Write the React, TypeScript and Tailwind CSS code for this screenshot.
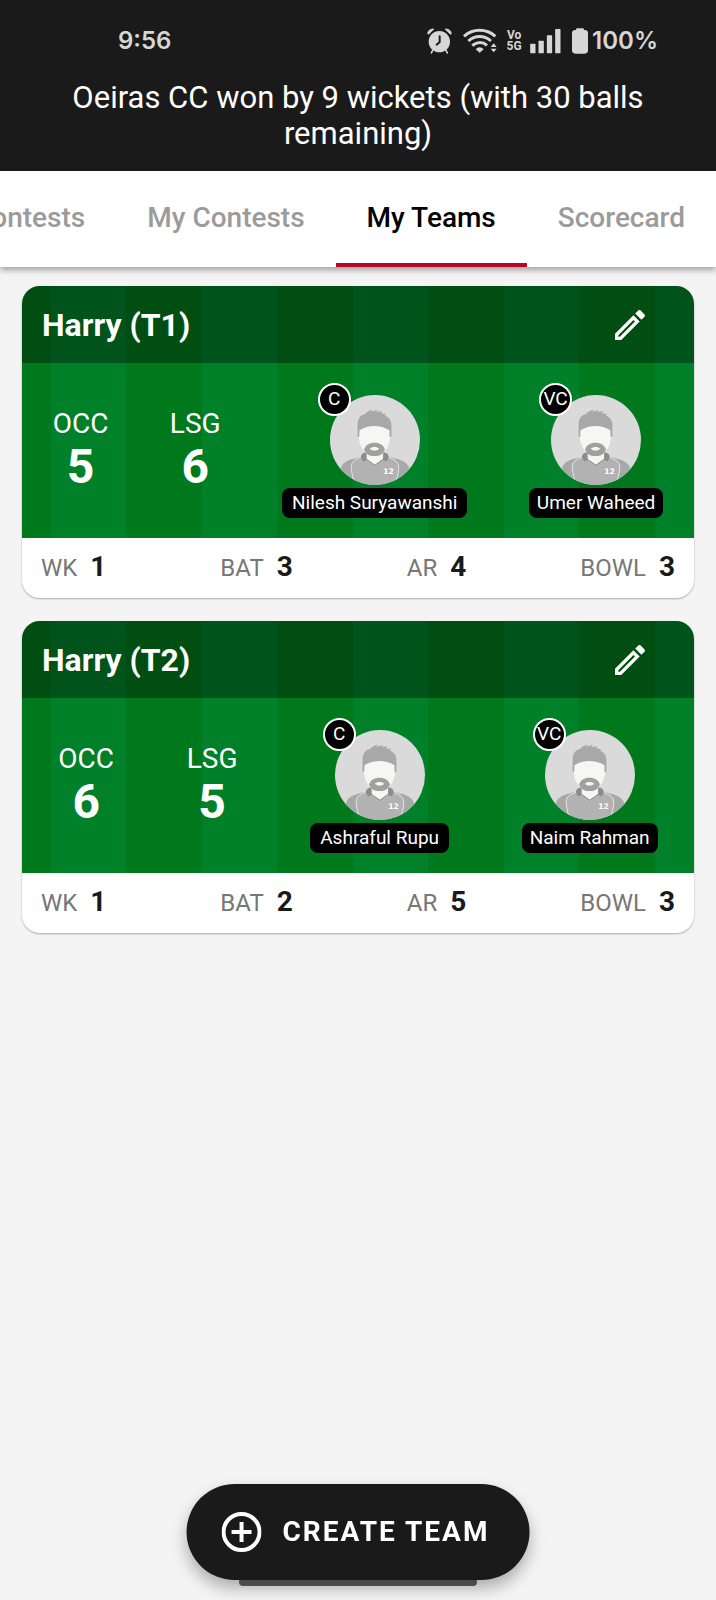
import React from 'react';

type Player = {
  badge: string;
  name: string;
};

type Team = {
  name: string;
  squads: { code: string; count: number }[];
  players: Player[];
  roles: { label: string; count: number }[];
};

const tabs = ['Contests', 'My Contests', 'My Teams', 'Scorecard'];

const teams: Team[] = [
  {
    name: 'Harry (T1)',
    squads: [
      { code: 'OCC', count: 5 },
      { code: 'LSG', count: 6 },
    ],
    players: [
      { badge: 'C', name: 'Nilesh Suryawanshi' },
      { badge: 'VC', name: 'Umer Waheed' },
    ],
    roles: [
      { label: 'WK', count: 1 },
      { label: 'BAT', count: 3 },
      { label: 'AR', count: 4 },
      { label: 'BOWL', count: 3 },
    ],
  },
  {
    name: 'Harry (T2)',
    squads: [
      { code: 'OCC', count: 6 },
      { code: 'LSG', count: 5 },
    ],
    players: [
      { badge: 'C', name: 'Ashraful Rupu' },
      { badge: 'VC', name: 'Naim Rahman' },
    ],
    roles: [
      { label: 'WK', count: 1 },
      { label: 'BAT', count: 2 },
      { label: 'AR', count: 5 },
      { label: 'BOWL', count: 3 },
    ],
  },
];

const StatusBar = () => (
  <div className="flex h-20 items-center justify-between pt-0.5 pr-[58px] pl-[118px] font-['Inter',sans-serif] text-2xl font-semibold text-[#d6d6d6]">
    <span>9:56</span>
    <div className="flex items-center">
      <svg viewBox="210 82 75 78" className="mr-[11px] h-[26px] w-[25px]" aria-hidden="true">
        <circle cx="247" cy="123" r="32" fill="currentColor" />
        <path d="M212 99c0-9 8-15 19-14l-16 16zM283 99c0-9-8-15-19-14l16 16z" fill="currentColor" stroke="currentColor" strokeWidth="2" strokeLinejoin="round" />
        <path d="M227 149l-4 8M267 149l4 8" stroke="currentColor" strokeWidth="5" strokeLinecap="round" />
        <path d="M248 107v17l-9 8" fill="none" stroke="#1a1a1a" strokeWidth="6" strokeLinecap="round" strokeLinejoin="round" />
      </svg>
      <svg viewBox="318 82 105 78" className="mr-[9px] h-[26px] w-[35px]" aria-hidden="true">
        <g fill="none" stroke="currentColor" strokeWidth="9">
          <path d="M321 107c27-24 67-24 94 0" />
          <path d="M334 121c20-18 48-18 68 0" />
          <path d="M346 135c13-12 31-12 44-1" />
        </g>
        <path d="M356 146c7-8 17-8 24 0l-12 10z" fill="currentColor" />
        <path d="M401 139l9-11 9 11zM401 144l9 11 9-11z" fill="currentColor" />
      </svg>
      <span className="mr-[9px] flex w-[14px] flex-col items-center font-['Liberation_Sans_Narrow','Roboto',sans-serif] text-xs leading-[11px] font-bold">
        <span>Vo</span>
        <span>5G</span>
      </span>
      <svg viewBox="518 82 92 78" className="mr-[11px] h-[26px] w-[31px]" fill="currentColor" aria-hidden="true">
        <rect x="518" y="129" width="16" height="29" rx="2" />
        <rect x="543" y="120" width="16" height="38" rx="2" />
        <rect x="568" y="104" width="16" height="54" rx="2" />
        <rect x="593" y="85" width="16" height="73" rx="2" />
      </svg>
      <svg viewBox="642 80 48 78" className="mr-1 h-[26px] w-4" fill="currentColor" aria-hidden="true">
        <rect x="654" y="81" width="24" height="14" rx="4" />
        <rect x="642" y="86" width="48" height="71" rx="10" />
      </svg>
      <span>100%</span>
    </div>
  </div>
);

const Avatar = () => (
  <svg viewBox="58 60 271 271" className="h-[90px] w-[90px] rounded-full bg-[#dadada]" aria-hidden="true">
    {/* shirt */}
    <path d="M90 292c0-26 14-36 62-46l40-8 40 8c50 10 66 20 66 48v40H90z" fill="#a8a8a8" />
    <path d="M152 247c-22 8-32 16-30 34 2 16 6 30 8 52h126c2-22 8-36 9-52 1-18-10-26-32-34l-40-6z" fill="#b2b2b2" />
    <path d="M152 247c-22 8-32 16-30 34 2 16 6 30 8 52M233 247c22 8 33 16 32 34-1 16-7 30-9 52" fill="none" stroke="#e6e6e6" strokeWidth="3" />
    {/* neck and collar */}
    <path d="M168 228h50v28l-25 20-25-20z" fill="#f6f6f4" />
    <path d="M168 233c-10 0-17 5-17 16l7 11 10-4 25 19 25-19 10 4 7-11c0-11-7-16-17-16v19l-25 18-25-18z" fill="#8c8c8c" />
    {/* face */}
    <path d="M145 165c20-20 75-20 94 0v22c-3 32-18 54-47 54s-45-22-47-54z" fill="#f6f6f4" />
    <path d="M161 223c4-12 15-19 31-19s27 7 31 19c-4 14-14 21-31 21s-27-7-31-21z" fill="#a0a0a0" />
    <path d="M178 222c6-7 22-7 28 0-4 7-24 7-28 0z" fill="#f6f6f4" />
    {/* hair */}
    <path d="M141 186v-38c1-18 9-29 23-31 6-7 14-11 23-13l-5 7c7-3 14-5 20-5l-5 6c7-3 13-3 19-1l-5 5c7-1 12 0 17 3l-6 3c12 4 20 13 21 27v37h-6v-20c-27-17-64-17-90 0l-1 20z" fill="#a8a8a8" />
    <text x="234" y="298" textAnchor="middle" fill="#fff" className="font-['DejaVu_Sans',sans-serif] text-[23px] font-bold">12</text>
  </svg>
);

const PlayerPick = ({ badge, name }: Player) => (
  <div className="flex flex-col items-center gap-[3px]">
    <div className="relative">
      <Avatar />
      <span className="absolute -top-3 -left-3 flex h-[33px] w-[33px] items-center justify-center rounded-full border-2 border-white bg-black text-[19px]">
        {badge}
      </span>
    </div>
    <span className={`rounded-lg bg-black text-[19px] leading-[30px] ${badge === 'C' ? 'px-2.5' : 'px-2'}`}>{name}</span>
  </div>
);

const TeamCard = ({ team }: { team: Team }) => (
  <article className="overflow-hidden rounded-[18px] bg-white shadow-[0_1px_2px_rgba(0,0,0,0.3)]">
    <div className="bg-[repeating-linear-gradient(90deg,#00781c_0_29px,#008028_29px_104px,#00781c_104px_151px)] text-white">
      <div className="flex h-[77px] items-center justify-between bg-black/35 pr-11 pl-5">
        <h2 className="text-[32px] font-bold">{team.name}</h2>
        <button type="button" aria-label={`Edit ${team.name}`}>
          <svg viewBox="0 0 24 24" className="h-10 w-10" fill="currentColor" aria-hidden="true">
            <path d="M14.06 9.02l.92.92L5.92 19H5v-.92l9.06-9.06M17.66 3c-.25 0-.51.1-.7.29l-1.83 1.83 3.75 3.75 1.83-1.83c.39-.39.39-1.02 0-1.41l-2.34-2.34c-.2-.2-.45-.29-.71-.29zm-3.6 3.19L3 17.25V21h3.75L17.81 9.94l-3.75-3.75z" />
          </svg>
        </button>
      </div>
      <div className="flex items-center justify-around pt-8 pb-5">
        {team.squads.map((squad) => (
          <div key={squad.code} className="mb-3 flex flex-col items-center">
            <span className="text-[28px] leading-8">{squad.code}</span>
            <span className="text-5xl leading-[54px] font-bold">{squad.count}</span>
          </div>
        ))}
        {team.players.map((player) => (
          <PlayerPick key={player.name} {...player} />
        ))}
      </div>
    </div>
    <dl className="flex h-[60px] items-center justify-between px-[19px] pb-0.5">
      {team.roles.map((role) => (
        <div key={role.label} className="flex items-baseline gap-[13px]">
          <dt className="text-2xl text-[#777]">{role.label}</dt>
          <dd className="text-[28px] font-bold text-[#1a1a1a]">{role.count}</dd>
        </div>
      ))}
    </dl>
  </article>
);

const App = () => {
  return (
    <div className="flex min-h-screen flex-col bg-[#f4f4f4] font-['Roboto',sans-serif]">
      <header className="bg-[#1a1a1a] pb-[19px]">
        <StatusBar />
        <h1 className="px-16 text-center text-[31px] leading-9 text-white">
          Oeiras CC won by 9 wickets (with 30 balls remaining)
        </h1>
      </header>

      <nav className="flex h-24 justify-end overflow-hidden bg-white shadow-[0_3px_6px_rgba(0,0,0,0.35)]">
        {tabs.map((tab) => (
          <button
            key={tab}
            type="button"
            className={`shrink-0 border-b-4 px-[31px] pt-0.5 text-[28px] font-medium ${
              tab === 'My Teams' ? 'border-[#b8082a] text-black' : 'border-transparent text-[#9b9b9b]'
            }`}
          >
            {tab}
          </button>
        ))}
      </nav>

      <main className="flex flex-1 flex-col gap-[23px] px-[22px] pt-[19px] pb-32">
        {teams.map((team) => (
          <TeamCard key={team.name} team={team} />
        ))}
      </main>

      {/* gesture bar, partly covered by the floating button */}
      <div className="fixed bottom-[14px] left-1/2 h-2 w-[238px] -translate-x-1/2 rounded-sm bg-[#606060]" />
      <button
        type="button"
        className="fixed bottom-5 left-1/2 flex h-24 -translate-x-1/2 items-center gap-[21px] rounded-full bg-[#1a1a1a] pr-10 pl-[35px] text-[28px] font-bold tracking-[2px] whitespace-nowrap text-white shadow-[0_8px_16px_rgba(0,0,0,0.3)]"
      >
        <svg viewBox="0 0 40 40" className="h-10 w-10" fill="none" stroke="currentColor" strokeWidth="4" aria-hidden="true">
          <circle cx="20" cy="20" r="18" />
          <path d="M20 10v20M10 20h20" />
        </svg>
        CREATE TEAM
      </button>
    </div>
  );
};

export default App;
